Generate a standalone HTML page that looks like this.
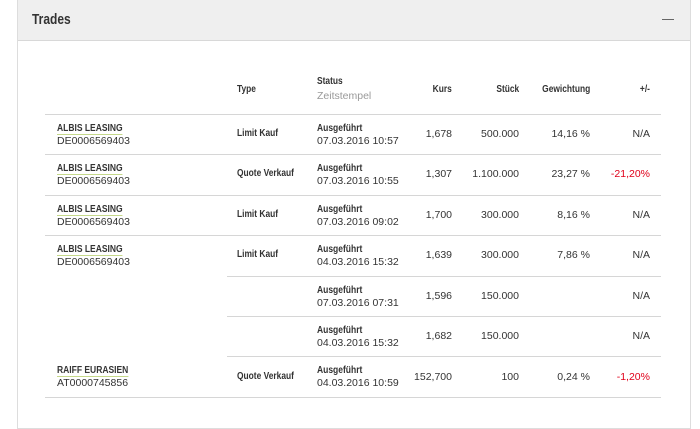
<!DOCTYPE html>
<html><head><meta charset="utf-8"><style>
*{margin:0;padding:0;box-sizing:border-box}
body{width:700px;height:421px;background:#fff;font-family:"Liberation Sans Narrow","Liberation Sans",sans-serif;color:#333;position:relative;overflow:hidden}
.panel{position:absolute;left:17px;top:-1px;width:674px;height:430px;border:1px solid #ddd;background:#fff}
.hd{height:41px;background:#efefef;border-bottom:1px solid #d8d8d8;position:relative}
.hd h1{position:absolute;left:14px;top:11px;font-size:15px;font-weight:bold;color:#333;transform:scaleX(.8);transform-origin:left}
.hd .min{position:absolute;right:16px;top:19px;width:12px;height:1px;background:#666}
.t{position:absolute;font-size:10.5px;line-height:12px;white-space:nowrap}
.b{font-weight:bold;font-size:10px;transform:scaleX(.84);transform-origin:left}
.b.r{transform-origin:right}
.r{text-align:right}
.g{color:#999}
.red{color:#e0001a}
.line{position:absolute;height:1px;background:#d6d6d6}
.nm{font-weight:bold;font-size:10px;border-bottom:1px solid #c5d88a;display:inline-block;line-height:11px;transform:scaleX(.85);transform-origin:left}
.st b{font-size:10px;display:inline-block;transform:scaleX(.85);transform-origin:left}
</style></head><body>
<div class="panel"><div class="hd"><h1>Trades</h1><div class="min"></div></div></div>

<div class="t b" style="left:237px;top:84px">Type</div>
<div class="t b" style="left:317px;top:76px">Status</div>
<div class="t g" style="left:317px;top:90px">Zeitstempel</div>
<div class="t b r" style="right:248px;top:84px">Kurs</div>
<div class="t b r" style="right:181px;top:84px">Stück</div>
<div class="t b r" style="right:110px;top:84px">Gewichtung</div>
<div class="t b r" style="right:50px;top:84px">+/-</div>

<div class="line" style="left:45px;width:616px;top:114px"></div>
<div class="line" style="left:45px;width:616px;top:154px"></div>
<div class="line" style="left:45px;width:616px;top:195px"></div>
<div class="line" style="left:45px;width:616px;top:235px"></div>
<div class="line" style="left:227px;width:434px;top:276px"></div>
<div class="line" style="left:227px;width:434px;top:316px"></div>
<div class="line" style="left:227px;width:434px;top:356px"></div>
<div class="line" style="left:45px;width:616px;top:397px"></div>

<div class="t" style="left:57px;top:122px"><span class="nm">ALBIS LEASING</span><br>DE0006569403</div>
<div class="t b" style="left:237px;top:128px">Limit Kauf</div>
<div class="t st" style="left:317px;top:122px"><b>Ausgeführt</b><br>07.03.2016 10:57</div>
<div class="t r" style="right:248px;top:128px">1,678</div>
<div class="t r" style="right:181px;top:128px">500.000</div>
<div class="t r" style="right:110px;top:128px">14,16 %</div>
<div class="t r" style="right:50px;top:128px">N/A</div>

<div class="t" style="left:57px;top:162px"><span class="nm">ALBIS LEASING</span><br>DE0006569403</div>
<div class="t b" style="left:237px;top:168px">Quote Verkauf</div>
<div class="t st" style="left:317px;top:162px"><b>Ausgeführt</b><br>07.03.2016 10:55</div>
<div class="t r" style="right:248px;top:168px">1,307</div>
<div class="t r" style="right:181px;top:168px">1.100.000</div>
<div class="t r" style="right:110px;top:168px">23,27 %</div>
<div class="t r red" style="right:50px;top:168px">-21,20%</div>

<div class="t" style="left:57px;top:203px"><span class="nm">ALBIS LEASING</span><br>DE0006569403</div>
<div class="t b" style="left:237px;top:209px">Limit Kauf</div>
<div class="t st" style="left:317px;top:203px"><b>Ausgeführt</b><br>07.03.2016 09:02</div>
<div class="t r" style="right:248px;top:209px">1,700</div>
<div class="t r" style="right:181px;top:209px">300.000</div>
<div class="t r" style="right:110px;top:209px">8,16 %</div>
<div class="t r" style="right:50px;top:209px">N/A</div>

<div class="t" style="left:57px;top:243px"><span class="nm">ALBIS LEASING</span><br>DE0006569403</div>
<div class="t b" style="left:237px;top:249px">Limit Kauf</div>
<div class="t st" style="left:317px;top:243px"><b>Ausgeführt</b><br>04.03.2016 15:32</div>
<div class="t r" style="right:248px;top:249px">1,639</div>
<div class="t r" style="right:181px;top:249px">300.000</div>
<div class="t r" style="right:110px;top:249px">7,86 %</div>
<div class="t r" style="right:50px;top:249px">N/A</div>

<div class="t st" style="left:317px;top:284px"><b>Ausgeführt</b><br>07.03.2016 07:31</div>
<div class="t r" style="right:248px;top:290px">1,596</div>
<div class="t r" style="right:181px;top:290px">150.000</div>
<div class="t r" style="right:50px;top:290px">N/A</div>

<div class="t st" style="left:317px;top:324px"><b>Ausgeführt</b><br>04.03.2016 15:32</div>
<div class="t r" style="right:248px;top:330px">1,682</div>
<div class="t r" style="right:181px;top:330px">150.000</div>
<div class="t r" style="right:50px;top:330px">N/A</div>

<div class="t" style="left:57px;top:364px"><span class="nm">RAIFF EURASIEN</span><br>AT0000745856</div>
<div class="t b" style="left:237px;top:371px">Quote Verkauf</div>
<div class="t st" style="left:317px;top:364px"><b>Ausgeführt</b><br>04.03.2016 10:59</div>
<div class="t r" style="right:248px;top:371px">152,700</div>
<div class="t r" style="right:181px;top:371px">100</div>
<div class="t r" style="right:110px;top:371px">0,24 %</div>
<div class="t r red" style="right:50px;top:371px">-1,20%</div>
</body></html>
